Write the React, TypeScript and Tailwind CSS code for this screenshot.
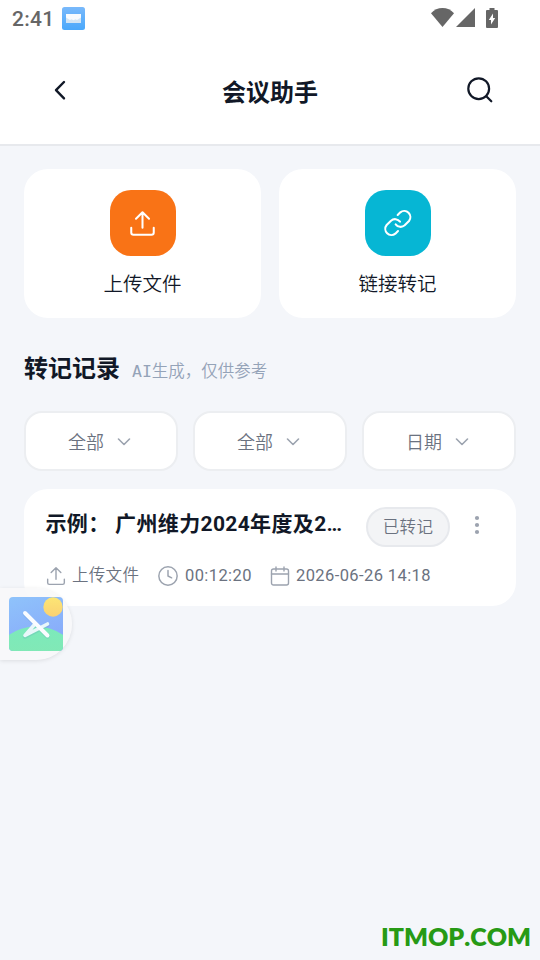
import type { ReactNode } from 'react';
import { Clock } from 'lucide-react';

const UploadIcon = ({ className, strokeWidth = 1.7 }: { className: string; strokeWidth?: number }) => (
  <svg className={className} viewBox="0 0 24 24" fill="none" stroke="currentColor" strokeWidth={strokeWidth} strokeLinecap="round" strokeLinejoin="round">
    <path d="M12 15.8V2M6.200 7.800L12 2L17.800 7.800M2 15.800v4.200a2 2 0 0 0 2 2h16a2 2 0 0 0 2-2v-4.200" />
  </svg>
);

const LinkIcon = () => (
  <svg className="h-7 w-7" viewBox="0 0 84 84" fill="none" stroke="currentColor" strokeWidth="6.200" strokeLinecap="round" strokeLinejoin="round">
    <path d="M41 18L49 10A18.500 18.500 0 0 1 75 36L62 49A18.500 18.500 0 0 1 35 46" />
    <path d="M42 66L34 74A18.500 18.500 0 0 1 8 48L21 35A18.500 18.500 0 0 1 48 38" />
  </svg>
);

const StatusBar = () => (
  <div className="flex h-9 items-center justify-between pl-3 pr-[42px] text-[#666]">
    <div className="flex items-center gap-2">
      <span className="w-[42px] whitespace-nowrap pt-[2px] font-['Roboto'] text-[21px] font-medium leading-9 tracking-[0.3px]">2:41</span>
      <svg className="h-[23px] w-[23px]" viewBox="0 0 23 23">
        <defs>
          <linearGradient id="mail" x1="0" y1="0" x2="0" y2="1">
            <stop offset="0" stopColor="#79b9fb" />
            <stop offset="1" stopColor="#4aa8fb" />
          </linearGradient>
        </defs>
        <rect width="23" height="23" rx="2.500" fill="url(#mail)" />
        <rect x="4" y="7" width="15" height="9" fill="#f8fbfe" />
        <path d="M4 16V10.500L8 13l1.500-.7 2 1 2-1 1.500.7 4-2.500V16z" fill="#d3e5f4" />
      </svg>
    </div>
    <div className="flex items-center pb-[1px]">
      <svg className="h-[19px] w-[23px]" viewBox="0 0 23 19" fill="currentColor">
        <path d="M11.500 19L0 5.200C3 1.900 7 0 11.500 0S20 1.900 23 5.200z" />
      </svg>
      <svg className="ml-[2px] h-[19px] w-[19px]" viewBox="0 0 19 19" fill="currentColor">
        <path d="M19 0v19H0z" />
      </svg>
      <svg className="ml-[11px] h-5 w-3" viewBox="0 0 12 20">
        <path d="M3.500 0h5v2H11a1 1 0 0 1 1 1v16a1 1 0 0 1-1 1H1a1 1 0 0 1-1-1V3a1 1 0 0 1 1-1h2.500z" fill="currentColor" />
        <path d="M7 5.500v4.500h2.200L5 16.500V12H2.800z" fill="#fff" />
      </svg>
    </div>
  </div>
);

const Header = () => (
  <header className="flex h-[110px] items-center justify-between border-b-2 border-[#e7e9ed] px-[45px]">
    <svg className="h-[30px] w-[30px]" viewBox="0 0 30 30" fill="none" stroke="currentColor" strokeWidth="2.400" strokeLinecap="round" strokeLinejoin="round">
      <path d="M19 7L11 15.200L19 23.400" />
    </svg>
    <h1 className="pt-[5px] text-2xl font-bold">会议助手</h1>
    <svg className="h-[30px] w-[30px]" viewBox="0 0 30 30" fill="none" stroke="currentColor" strokeWidth="2.200" strokeLinecap="round">
      <circle cx="13.700" cy="13.700" r="10.400" />
      <path d="M21.300 21.300l5 5" />
    </svg>
  </header>
);

const ActionCard = ({ label, color, children }: { label: string; color: string; children: ReactNode }) => (
  <button className="flex h-[149px] flex-1 flex-col items-center rounded-[24px] bg-white pt-[21px]">
    <span className={`flex h-[66px] w-[66px] items-center justify-center rounded-[21px] text-white ${color}`}>{children}</span>
    <span className="mt-[15px] text-[19.5px] font-[350] leading-7">{label}</span>
  </button>
);

const Filter = ({ label }: { label: string }) => (
  <button className="flex h-[60px] flex-1 items-center justify-center gap-[13px] rounded-[18px] border-2 border-[#eceef1] bg-white pr-[3px] text-[18px] font-[350] text-[#6b7280]">
    <span className="pt-[3px]">{label}</span>
    <svg className="mt-[2px] h-[8px] w-[14px] text-[#9ca3af]" viewBox="0 0 14 8" fill="none" stroke="currentColor" strokeWidth="1.600" strokeLinecap="round" strokeLinejoin="round">
      <path d="M1.500 1L7 6.500L12.500 1" />
    </svg>
  </button>
);

const RecordCard = () => (
  <article className="mt-[18px] h-[117px] rounded-[24px] bg-white px-[21px] pt-[18px]">
    <div className="flex h-10 items-center">
      <h3 className="w-[300px] whitespace-nowrap pb-[6px] pl-[0.5px] text-[21px] font-bold leading-[30px] tracking-[0.35px]">示例： 广州维力2024年度及2…</h3>
      <span className="ml-[21px] flex h-[40px] w-[84px] items-center justify-center rounded-full border-2 border-[#e7e9ed] bg-[#f3f4f6] pt-[2px] text-[16.5px] font-[350] tracking-[0.3px] text-[#6b7280]">已转记</span>
      <svg className="ml-[24px] mb-1 h-5 w-[6px] text-[#9ca3af]" viewBox="0 0 6 20" fill="currentColor">
        <circle cx="3" cy="3" r="2.100" />
        <circle cx="3" cy="10" r="2.100" />
        <circle cx="3" cy="17" r="2.100" />
      </svg>
    </div>
    <div className="mt-[17px] flex h-6 items-center text-[16.5px] font-[350] text-[#6b7280]">
      <UploadIcon className="ml-[1px] h-[20px] w-[20px] text-[#9ca3af]" />
      <span className="ml-[6px] w-[68px] whitespace-nowrap tracking-[0.3px]">上传文件</span>
      <Clock className="ml-[17px] h-[22px] w-[22px] text-[#9ca3af]" strokeWidth={1.6} />
      <span className="ml-[6px] w-[68px] whitespace-nowrap font-normal tracking-[0.4px]">00:12:20</span>
      <svg className="ml-[17px] h-[20px] w-[20px] text-[#9ca3af]" viewBox="0 0 20 20" fill="none" stroke="currentColor" strokeWidth="1.400" strokeLinecap="round">
        <rect x="1.500" y="3" width="17" height="16" rx="2" />
        <path d="M1.500 8h17M6 1v4M14 1v4" />
      </svg>
      <span className="ml-[6px] whitespace-nowrap font-normal tracking-[0.4px]">2026-06-26 14:18</span>
    </div>
  </article>
);

// Translucent launcher docked at the left edge
const FloatingButton = () => (
  <div className="absolute left-0 top-[588px] flex h-[72px] w-[72px] items-center rounded-r-full bg-[#f8f8f9]/90 pl-[9px] shadow-[0_1px_4px_rgba(0,0,0,0.1)]">
    <svg className="h-[54px] w-[54px]" viewBox="0 0 54 54">
      <defs>
        <linearGradient id="sky" x1="0" y1="0" x2="0.400" y2="1">
          <stop offset="0" stopColor="#8fc3fb" />
          <stop offset="1" stopColor="#88aafa" />
        </linearGradient>
        <linearGradient id="hill" x1="0" y1="0" x2="0" y2="1">
          <stop offset="0" stopColor="#7ceabb" />
          <stop offset="1" stopColor="#87e6b0" />
        </linearGradient>
        <linearGradient id="sun" x1="0" y1="0" x2="0" y2="1">
          <stop offset="0" stopColor="#fce675" />
          <stop offset="1" stopColor="#fad172" />
        </linearGradient>
        <clipPath id="tile">
          <rect width="54" height="54" rx="4" />
        </clipPath>
      </defs>
      <g clipPath="url(#tile)">
        <rect width="54" height="54" fill="url(#sky)" />
        <ellipse cx="27" cy="58" rx="38" ry="28.500" fill="url(#hill)" />
        <circle cx="44" cy="10" r="9.700" fill="url(#sun)" />
        <g fill="none" strokeLinecap="round" strokeLinejoin="round">
          <path d="M16 17L38.500 39.500M25.500 28L16 39.500L38.500 28" stroke="#558bb0" strokeOpacity="0.180" strokeWidth="4.500" />
          <path d="M26 27L16 38.500L38.500 27" stroke="#e9f7fa" strokeWidth="3.600" />
          <path d="M16 16L38.500 38.500" stroke="#fafcff" strokeWidth="3.900" />
        </g>
      </g>
    </svg>
  </div>
);

const App = () => {
  return (
    <div className="relative h-[960px] w-[540px] overflow-hidden bg-[#f4f6fa] font-['Roboto','Noto_Sans_CJK_SC',sans-serif] text-[#111827]">
      <div className="bg-white">
        <StatusBar />
        <Header />
      </div>
      <main className="px-6 pt-[23.4px]">
        <div className="flex gap-[18px]">
          <ActionCard label="上传文件" color="bg-[#f97316]">
            <UploadIcon className="mt-[1px] h-[27px] w-[27px]" strokeWidth={1.8} />
          </ActionCard>
          <ActionCard label="链接转记" color="bg-[#06b6d4]">
            <LinkIcon />
          </ActionCard>
        </div>
        <div className="mt-[32.6px] flex h-9 items-center">
          <h2 className="text-2xl font-bold leading-9">转记记录</h2>
          <span className="ml-[12px] pt-[6px] font-['DejaVu_Sans_Mono','Noto_Sans_CJK_SC',monospace] text-[16.5px] font-[350] text-[#94a3b8]">AI生成，仅供参考</span>
        </div>
        <div className="mt-[24px] flex gap-[15px]">
          <Filter label="全部" />
          <Filter label="全部" />
          <Filter label="日期" />
        </div>
        <RecordCard />
      </main>
      <FloatingButton />
      <div className="absolute bottom-[6px] right-[9px] font-['Lato',sans-serif] text-[25px] font-extrabold leading-9 text-[#279a15] [font-kerning:none]">ITMOP.COM</div>
    </div>
  );
};

export default App;
